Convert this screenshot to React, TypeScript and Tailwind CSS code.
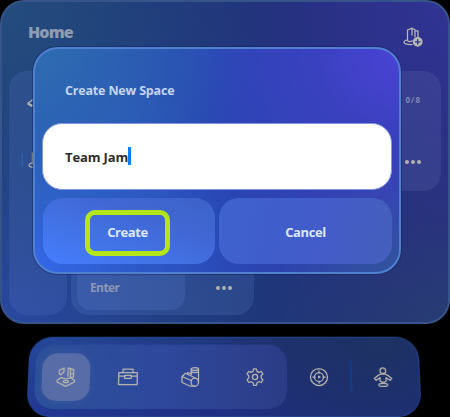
import type { ReactNode } from "react";

function Icon({ children, size = 20 }: { children: ReactNode; size?: number }) {
  return (
    <svg
      width={size}
      height={size}
      viewBox="0 0 20 20"
      fill="none"
      stroke="currentColor"
      strokeWidth="1.25"
      strokeLinejoin="round"
      strokeLinecap="round"
      className="block shrink-0"
    >
      {children}
    </svg>
  );
}

const HomeIcon = () => (
  <Icon>
    <path d="M1.2 13.6 5.2 10.6 10 12 14.8 10.6 18.6 13.6V15L10 19.4 1.2 15Z" />
    <ellipse cx="10" cy="14.5" rx="2.6" ry="1.2" />
    <path d="M3.2 3.4 8 1V4.6L4.8 7.8 3.2 6.8Z M12 9.2V.8L17.5 2.6v7.4L14.5 10.6 M14.4 1.6v8.2 M16 6.3v.8" />
  </Icon>
);

const LayersIcon = () => (
  <Icon>
    <path d="M1 10 5 7.2 10 5.5l5 1.7L19 10l-9 5Z M1 10v1.2l3.5 2" />
  </Icon>
);

const CaseIcon = () => (
  <Icon>
    <path d="M.7 5.5h18.6v12H.7Z M5 5.5V2.2h10v3.3 M1 9.2h5.8M13.2 9.2h5.8 M6.8 8.4h6.4v3H6.8Z" />
  </Icon>
);

const ShapesIcon = () => (
  <Icon>
    <path d="M10.2 2v5.5 M17.5 2v13.5 M1 9.5 4.5 6.3l9.5 4.4 M1 9.5l9.2 4 M1 9.5v6l8.5 3.7h4.5" />
    <path d="M6.5 7.2V5.5l3.5 1.2" />
    <ellipse cx="13.8" cy="2" rx="3.7" ry="1.4" />
    <path d="M10.2 4.8c1.5 1.2 5.5 1.2 7.3 0" />
    <ellipse cx="13.8" cy="15.2" rx="3.7" ry="4.2" />
  </Icon>
);

const GearIcon = () => (
  <Icon>
    <path d="m8.6 1.8h2.8l.6 2.6 1.8 1 2.5-1 1.6 2.5-1.7 2v2l1.7 2-1.6 2.6-2.5-.8-1.8 1-.6 2.6H8.6L8 15.7l-1.8-1-2.5.8-1.6-2.6 1.7-2v-2l-1.7-2 1.6-2.5 2.5 1 1.8-1Z" />
    <circle cx="10" cy="10" r="2.6" />
  </Icon>
);

const TargetIcon = () => (
  <Icon>
    <circle cx="10" cy="10" r="8.5" />
    <circle cx="10" cy="10" r="4.5" />
    <path d="M10 3.8V6M10 14v2.2M3.8 10H6M14 10h2.2M9.7 9.2l1.3.8-1.3.8Z" />
  </Icon>
);

const PersonIcon = () => (
  <Icon>
    <path d="M7.3 5.5V3.6a2.7 2.7 0 0 1 5.4 0v1.9c-1.1 1.2-4.3 1.2-5.4 0Z" />
    <path d="M7.6 7.2h4.8l2.6 1.2 3.7 3.1-1.8 1.8-3.9-2.6v3.4l-1.3 1H8.3l-1.3-1v-3.4l-3.9 2.6-1.8-1.8L5 8.4Z" />
    <ellipse cx="10" cy="17.9" rx="4.4" ry="1.5" />
  </Icon>
);

const AddSpaceIcon = () => (
  <Icon>
    <path d="M4.5 13.5V3L9 1.2l3 1.5v7 M9 1.2V8 M12 3.8h3v6 M4.5 12.8c-2.4.3-3.8 1.6-3.4 3 .5 1.6 4.2 1.8 8 1.7 M4.5 13.8c1.8 1.2 3.2 1 4.8 0" />
    <circle cx="14.7" cy="14.8" r="4.3" fill="currentColor" />
    <path d="M12.4 14.8h4.6M14.7 12.5v4.6" stroke="#2c338b" />
  </Icon>
);

function Dots() {
  return (
    <div className="flex gap-[2px]">
      <i className="size-1 rounded-full bg-[#b5b3b0]" />
      <i className="size-1 rounded-full bg-[#b5b3b0]" />
      <i className="size-1 rounded-full bg-[#b5b3b0]" />
    </div>
  );
}

function HomePanel() {
  return (
    <main className="flex h-[324px] w-[450px] flex-col rounded-[24px] border-2 border-[#365489] bg-[radial-gradient(circle_at_0%_0%,#244c7c_0%,#22487d80_25%,transparent_55%),radial-gradient(circle_at_100%_0%,#303393_0%,#2b318980_35%,transparent_65%),radial-gradient(circle_at_0%_100%,#2948a0_0%,#25458d80_35%,transparent_70%),radial-gradient(circle_at_100%_100%,#263e70_0%,transparent_35%),linear-gradient(90deg,#1e3d78,#1b3071_60%,#292e79)] bg-origin-border px-[7px]">
      <header className="flex h-[69px] items-start justify-between pl-[19px] pr-[18px]">
        <h1 className="mt-[18px] font-['Open_Sans',sans-serif] text-[16px] font-extrabold leading-6 tracking-[-0.9px] text-[#8f9baf]">Home</h1>
        <div className="mt-[25px] text-[#b9b7b4]"><AddSpaceIcon /></div>
      </header>
      <div className="flex gap-1">
        <nav className="flex h-[244px] w-[58px] flex-col rounded-[18px] bg-[#5578c238] pl-[18px] text-[#b2b2b0]">
          <div className="mt-[22px]"><LayersIcon /></div>
          <div className="mt-[37px] flex items-center">
            <i className="-ml-[6px] mr-[5px] h-[14px] w-[2px] bg-[#275f9f]" />
            <AddSpaceIcon />
          </div>
        </nav>
        <section className="flex w-[370px] flex-col justify-between">
          <div className="flex h-[120px] flex-col items-end rounded-[18px] bg-[#6270b338] pr-[20px]">
            <span className="mt-[23px] font-['Open_Sans',sans-serif] text-[8px] font-bold leading-3 tracking-[1px] text-[#8286b3]">0/8</span>
            <div className="mt-[54px]"><Dots /></div>
          </div>
          <div className="flex h-[80px] w-[183px] items-center rounded-[18px] bg-[#6488cd30] pl-[6px]">
            <button className="mt-2 flex h-[62px] w-[108px] items-center rounded-[14px] bg-[#6488df30] pl-[13px] font-['Open_Sans',sans-serif] text-[12px] font-bold tracking-[-0.6px] text-[#8b97b5]">
              <span className="mt-[18px]">Enter</span>
            </button>
            <div className="ml-[31px] mt-[25px]"><Dots /></div>
          </div>
        </section>
      </div>
    </main>
  );
}

function CreateSpaceDialog() {
  return (
    <section
      role="dialog"
      className="absolute left-[33px] top-[47px] flex h-[227px] w-[368px] flex-col rounded-[25px] border-2 border-[#4f80d2] bg-[radial-gradient(circle_at_0%_0%,#2e6cb0_0%,#2c65b0aa_22%,transparent_50%),radial-gradient(circle_at_100%_0%,#4a43d7_0%,#4240cb99_20%,transparent_50%),radial-gradient(circle_at_0%_100%,#3567e8_0%,#2e5fd0aa_25%,transparent_52%),radial-gradient(circle_at_100%_100%,#31559d_0%,transparent_28%),linear-gradient(95deg,#2b5abb,#2845b2_50%,#3340ab)] bg-origin-border pl-2 pr-[7px] font-['Open_Sans',sans-serif] shadow-[0_0_0_1px_#101d4866]"
    >
      <h2 className="h-[74px] pl-[22px] pt-[32px] text-[12.5px] font-bold leading-5 tracking-[-0.18px] text-[#c4d4f1]">Create New Space</h2>
      <div className="-ml-px flex h-[67px] shrink-0 items-center rounded-[20px] border border-[#8297e0] bg-white pl-[22px] text-[13px] font-bold tracking-[-0.12px] text-[#2b2c2e]">
        <span className="mt-[2px]">Team Jam</span>
        <i className="-mt-px h-[18px] w-[3px] bg-[#087cff]" />
      </div>
      <div className="mt-2 flex gap-1 text-[13px] font-bold tracking-[-0.4px] text-[#dfe6fa]">
        <button className="flex h-[66px] w-[172px] items-center rounded-[20px] bg-[linear-gradient(20deg,#467dff,#4273e6_35%,#4167d5_65%,#3c62c7)] pl-[42px]">
          <span className="mt-[4px] flex h-[46px] w-[85px] items-center justify-center rounded-[10px] border-[5px] border-[#b4e51b]">Create</span>
        </button>
        <button className="h-[66px] flex-1 rounded-[20px] bg-[linear-gradient(100deg,#3e62cf,#425bc8_60%,#455fbc)] pt-1">Cancel</button>
      </div>
    </section>
  );
}

function Dock() {
  return (
    <nav className="ml-[28px] mt-3 flex h-[81px] w-[392px] origin-center items-center rounded-[23px] border border-[#22428a] bg-[radial-gradient(circle_at_90%_0%,#1e3263_0%,transparent_45%),linear-gradient(0deg,#1f2a8a90,transparent),linear-gradient(90deg,#25489b,#1e3172_65%,#1f2d78)] pl-[6px] text-[#bbb8af] [transform:perspective(600px)_rotateX(8deg)]">
      <div className="flex h-[65px] w-[252px] items-center rounded-[19px] bg-[linear-gradient(90deg,#2c5099,#2e489c_50%,#2c3c86)] pl-[7px]">
        <div className="flex size-[48px] items-center justify-center rounded-[15px] bg-[#586da7] shadow-[0_0_8px_#536ca755]"><HomeIcon /></div>
        <div className="ml-[28px]"><CaseIcon /></div>
        <div className="ml-[43px]"><ShapesIcon /></div>
        <div className="ml-[44px]"><GearIcon /></div>
      </div>
      <div className="ml-[22px]"><TargetIcon /></div>
      <i className="ml-[21px] h-[33px] w-[2px] bg-[#103c8c]" />
      <div className="ml-[21px]"><PersonIcon /></div>
    </nav>
  );
}

export default function App() {
  return (
    <div className="relative h-[417px] w-[450px] overflow-hidden bg-black">
      <HomePanel />
      <Dock />
      <CreateSpaceDialog />
    </div>
  );
}
